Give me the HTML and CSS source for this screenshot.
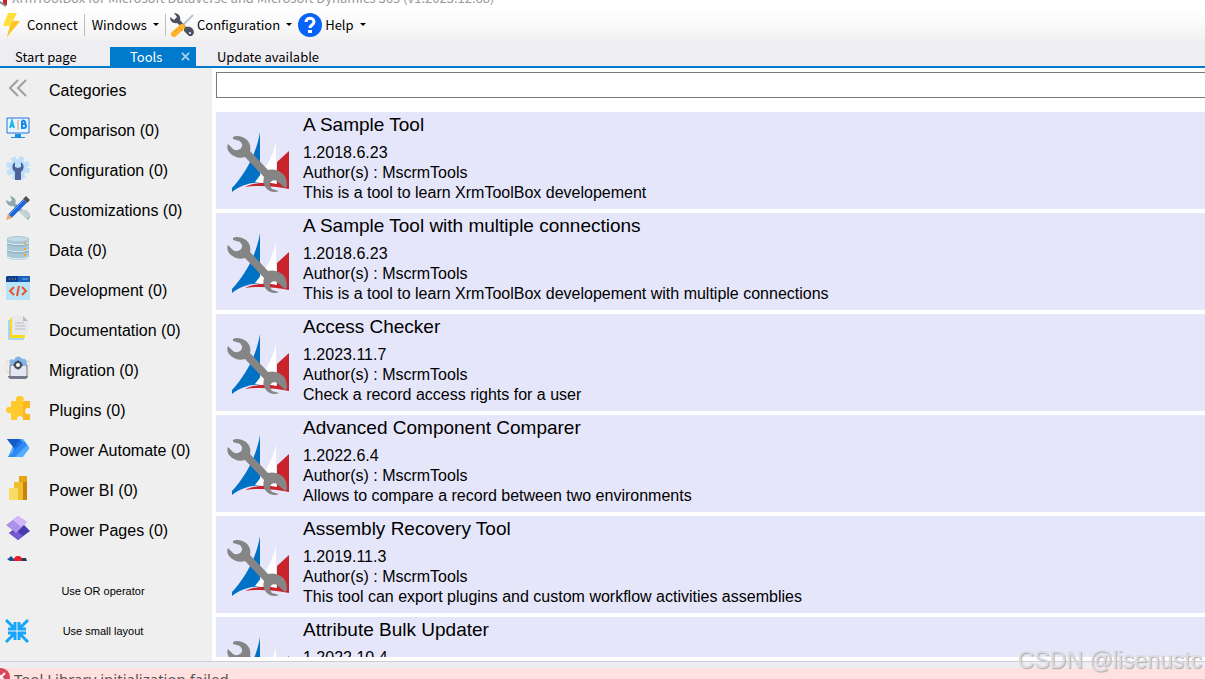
FILE: index.html
```html
<!DOCTYPE html>
<html lang="en">
<head>
  <meta charset="UTF-8">
  <meta name="viewport" content="width=device-width, initial-scale=1.0">
  <title>XrmToolBox</title>
  <link rel="stylesheet" href="styles.css">
</head>
<body>
  <svg class="sprite" aria-hidden="true">
    <symbol id="logo" viewBox="0 0 62 64">
      <path fill="#0072c6" d="M5 61V57C17 44 29 25 33 1V52C23 51 13 55 5 61Z"/>
      <path fill="#fff" d="M28 51C37 40 45 28 49 11V56C42 54 36 52 28 51Z"/>
      <path fill="#c9242b" d="M50 31L62 20V58C47 55 32 54 18 56C29 51 40 51 50 53Z"/>
      <path fill="#858585" d="M6 6C9 4 15 5 19 8C23 11 24 16 23 20L41 39C44 38 50 38 55 42C59 45 60 50 60 55L58 57L51 51C48 47 42 50 43 55L45 58L52 60C48 62 42 61 39 57C36 53 36 50 37 46L18 26C13 28 6 26 2 21C0 18 0 15 1 13L6 18C10 21 16 18 15 13L13 10L6 8Z"/>
    </symbol>
  </svg>

  <header class="titlebar">
    <svg class="app-icon" viewBox="0 0 8 8"><path fill="#c9242b" d="M3 0h4v5H3z"/><path stroke="#858585" stroke-width="2" d="M0 2l6 4"/></svg>
    <span>XrmToolBox for Microsoft Dataverse and Microsoft Dynamics 365 (v1.2023.12.68)</span>
  </header>

  <nav class="toolbar">
    <button>
      <svg viewBox="0 0 24 24"><path fill="#ffe03b" d="M8 0h9l-4 8h7L7 24l3-11H3z"/><path fill="#ffc328" d="M13 8h7L7 24l3-11z"/></svg>
      Connect
    </button>
    <button class="divided">Windows <i class="caret"></i></button>
    <button class="divided tight">
      <svg viewBox="0 0 24 24"><path stroke="#b9c3cb" stroke-width="2" d="M23 2L12 13"/><path fill="#4b5163" d="M4 0C9 0 11 4 10 7L16 14C21 13 24 16 24 20L22 23H19L14 18V16L7 10C3 11 0 8 0 4L4 7L7 4z"/><path stroke="#ffb52c" stroke-width="6" stroke-linecap="round" d="M12 14L4 21"/><path stroke="#ef8b2c" stroke-width="1" d="M9 14l4 4M5 19l3-3"/><circle cx="20" cy="20" r="1" fill="#fff"/></svg>
      Configuration <i class="caret"></i>
    </button>
    <button>
      <svg viewBox="0 0 24 24"><circle cx="12" cy="12" r="12" fill="#0864f7"/><path fill="none" stroke="#fff" stroke-width="3" d="M8 9c0-5 8-5 8 0 0 3-4 3-4 6"/><path fill="#fff" d="M10 17h4v3h-4z"/></svg>
      Help <i class="caret"></i>
    </button>
  </nav>

  <nav class="tabs">
    <a href="#start" class="tab start">Start page</a>
    <div class="tab active"><a href="#tools">Tools</a><button aria-label="Close Tools"><svg viewBox="0 0 10 10"><path stroke="#a9d0ee" stroke-width="2" d="M1 1l8 8M9 1L1 9"/></svg></button></div>
    <a href="#update" class="tab update">Update available</a>
  </nav>

  <main>
    <aside class="sidebar">
      <div class="categories">
        <button>
          <svg viewBox="0 0 24 24"><path fill="none" stroke="#a0a0a0" stroke-width="2" d="M12 4l-8 8 8 8M20 4l-8 8 8 8"/></svg>
          Categories
        </button>
        <button>
          <svg viewBox="0 0 24 24"><path fill="#e4f6ff" stroke="#2b6fe0" stroke-width="1" d="M1 2h22v15H1z"/><path fill="none" stroke="#25b5ea" stroke-width="2" d="M4 12l2-7 2 7M5 10h3"/><path fill="none" stroke="#1689e8" stroke-width="2" d="M16 5v7h2q2 0 2-2t-2-2h-2 2q2 0 1-2t-3-1"/><path stroke="#f08a62" d="M12 4v10"/><path fill="#188fe6" d="M9 18h6v3h4v1H5v-1h4z"/></svg>
          Comparison (0)
        </button>
        <button>
          <svg viewBox="0 0 24 24"><circle cx="12" cy="12" r="9" fill="#bfe0fb"/><circle cx="12" cy="12" r="10" fill="none" stroke="#bfe0fb" stroke-width="4" stroke-dasharray="5 3"/><path fill="#4f639b" d="M9 6v5l3 1 3-1V6c4 3 3 8 0 10v8H9v-8C5 13 6 8 9 6z"/></svg>
          Configuration (0)
        </button>
        <button>
          <svg viewBox="0 0 24 24"><path fill="#8fa7ad" d="M4 0C9 1 11 5 9 7L17 14C21 14 24 17 24 21L22 24L17 19L15 17L7 10C3 11 0 7 0 4L4 6L6 4z"/><path fill="#c2d2d5" d="M14 14l3 0c3 0 6 3 7 6l-3 3-7-6z"/><path stroke="#1e65dc" stroke-width="5" d="M19 5L4 20"/><path stroke="#5b9bf5" stroke-width="1" d="M18 4L3 19"/><path fill="#4a4f55" d="M17 3l3-3 4 4-3 3z"/><path fill="#f3a06b" d="M2 18l4 4-6 2z"/></svg>
          Customizations (0)
        </button>
        <button>
          <svg viewBox="0 0 24 24"><path fill="#a9c7d5" d="M1 3c0-4 22-4 22 0v18c0 4-22 4-22 0z"/><ellipse cx="12" cy="3" rx="10" ry="2" fill="#c4dbe5"/><path fill="none" stroke="#e8f3f7" stroke-width="1" d="M1 7q11 4 22 0M1 14q11 4 22 0M1 21q11 4 22 0"/><path fill="none" stroke="#86a6b5" stroke-width="1" d="M1 8q11 4 22 0M1 15q11 4 22 0"/><path fill="#f2a33a" d="M18 6h2v2h-2zM18 12h2v2h-2zM18 18h2v2h-2z"/></svg>
          Data (0)
        </button>
        <button>
          <svg viewBox="0 0 24 24"><rect width="24" height="24" rx="1" fill="#b9e3f8"/><path fill="#0b3f91" d="M1 0h22l1 1v5H0V1z"/><path fill="#1761bd" d="M12 0h11l1 1v5H12z"/><path stroke="#ff9440" stroke-width="1" stroke-dasharray="1 2" d="M3 3h8"/><path stroke="#74b7ef" d="M16 3h6"/><path fill="none" stroke="#ee5327" stroke-width="2" d="M8 11l-4 4 4 4M16 11l4 4-4 4M13 10l-2 10"/></svg>
          Development (0)
        </button>
        <button>
          <svg viewBox="0 0 24 24"><path fill="#a9d5f3" d="M2 4h16v20H3l-1-1z"/><path fill="#f8dc19" d="M4 2h15v20H4z"/><path fill="#e9e9ec" d="M6 0h11l5 5v14H6z"/><path fill="#b8b8bd" d="M17 0v5h5z"/><path stroke="#bcbcc1" d="M9 7h9M9 10h10M9 13h10"/></svg>
          Documentation (0)
        </button>
        <button>
          <svg viewBox="0 0 24 24"><path fill="#e4e7f1" stroke="#6f7588" d="M4 9h17v12H4z"/><path fill="#82b4ea" d="M4 9c-2-4 1-7 4-5 2-5 7-4 8-1 5-1 6 4 4 7z"/><circle cx="12" cy="9" r="3" fill="#fff" stroke="#424957" stroke-width="2"/><path stroke="#424957" d="M12 4v2M12 12v2M7 9h2M15 9h2"/><path fill="#727888" d="M2 20h20v1l-2 2H4l-2-2z"/><path fill="none" stroke="#eccb91" stroke-dasharray="2 1" d="M3 5H0v11h3M21 5h3v11h-3"/></svg>
          Migration (0)
        </button>
        <button>
          <svg viewBox="0 0 24 24"><path fill="#ffca2c" d="M5 5h5C9 2 11 0 14 0s5 2 3 5h7v7c-3-1-5 0-5 3s2 4 5 3v6h-7c0-3-1-4-3-4s-3 1-3 4H5v-7c-3 1-5-1-5-3s2-4 5-3z"/><path fill="#fdb722" d="M17 5h7v7c-3-1-5 0-5 3s2 4 5 3v6h-7z"/></svg>
          Plugins (0)
        </button>
        <button>
          <svg viewBox="0 0 24 24"><path fill="#56adff" d="M10 3h7l6 8v2l-6 8H2z"/><path fill="#1e70e5" d="M1 3h13l4 5L8 19l-1-1 1-6z"/><path fill="#155bc7" d="M1 3h13L8 12z"/><path fill="#2e89f4" d="M2 21L18 5l3 4-12 12z"/></svg>
          Power Automate (0)
        </button>
        <button>
          <svg viewBox="0 0 24 24"><rect x="13" width="8" height="24" rx="1" fill="#e4a414"/><path fill="#c98209" d="M17 6h4v18h-4z"/><rect x="8" y="6" width="9" height="18" rx="1" fill="#efbe2d"/><rect x="3" y="12" width="9" height="12" rx="1" fill="#f8dc62"/></svg>
          Power BI (0)
        </button>
        <button>
          <svg viewBox="0 0 24 24"><path fill="#4939ac" d="M3 17l8-6 7-2 6 6-12 9z"/><path fill="#745ad3" d="M3 17l8-2 6 5-5 4z"/><path fill="#ab91ea" d="M0 9L12 0l9 6-11 11z"/><path fill="#d1b9f7" d="M7 4l5-4 9 6-6 5z"/></svg>
          Power Pages (0)
        </button>
        <button aria-label="More categories">
          <svg viewBox="0 0 24 24"><path fill="#194f91" d="M1 3l2-1 2-2 3 3 2-1v3H4z"/><path fill="#263b54" d="M14 2h6l1 3h-7z"/><circle cx="12" cy="4" r="4" fill="#e51c2b"/></svg>
        </button>
      </div>
      <div class="options">
        <button>Use OR operator</button>
        <button>
          <svg viewBox="0 0 24 24"><path fill="none" stroke="#16a5fa" stroke-width="3" d="M1 1l8 8M10 3v7H3M23 1l-8 8M14 3v7h7M1 23l8-8M10 21v-7H3M23 23l-8-8M14 21v-7h7"/></svg>
          Use small layout
        </button>
      </div>
    </aside>

    <section class="content">
      <input class="search" type="text" aria-label="Search tools">
      <div class="tools">
        <article class="tool">
          <svg><use href="#logo"/></svg>
          <div>
            <h2>A Sample Tool</h2>
            <p>1.2018.6.23</p>
            <p>Author(s) : MscrmTools</p>
            <p>This is a tool to learn XrmToolBox developement</p>
          </div>
        </article>
        <article class="tool">
          <svg><use href="#logo"/></svg>
          <div>
            <h2>A Sample Tool with multiple connections</h2>
            <p>1.2018.6.23</p>
            <p>Author(s) : MscrmTools</p>
            <p>This is a tool to learn XrmToolBox developement with multiple connections</p>
          </div>
        </article>
        <article class="tool">
          <svg><use href="#logo"/></svg>
          <div>
            <h2>Access Checker</h2>
            <p>1.2023.11.7</p>
            <p>Author(s) : MscrmTools</p>
            <p>Check a record access rights for a user</p>
          </div>
        </article>
        <article class="tool">
          <svg><use href="#logo"/></svg>
          <div>
            <h2>Advanced Component Comparer</h2>
            <p>1.2022.6.4</p>
            <p>Author(s) : MscrmTools</p>
            <p>Allows to compare a record between two environments</p>
          </div>
        </article>
        <article class="tool">
          <svg><use href="#logo"/></svg>
          <div>
            <h2>Assembly Recovery Tool</h2>
            <p>1.2019.11.3</p>
            <p>Author(s) : MscrmTools</p>
            <p>This tool can export plugins and custom workflow activities assemblies</p>
          </div>
        </article>
        <article class="tool">
          <svg><use href="#logo"/></svg>
          <div>
            <h2>Attribute Bulk Updater</h2>
            <p>1.2022.10.4</p>
          </div>
        </article>
      </div>
    </section>
  </main>

  <footer class="status">
    <div class="error">
      <svg viewBox="0 0 18 18"><circle cx="9" cy="9" r="9" fill="#d9455a"/><path stroke="#fff" stroke-width="2" d="M5 5l8 8M13 5l-8 8"/></svg>
      <span>Tool Library initialization failed</span>
    </div>
  </footer>
  <div class="watermark">CSDN @lisenustc</div>
</body>
</html>
```
FILE: styles.css
```css
* {
  padding: 0;
  margin: 0;
  box-sizing: border-box;
}
body {
  display: flex;
  flex-direction: column;
  height: 100vh;
  overflow: hidden;
  background-color: #fff;
  color: #000;
  font-family: "Liberation Sans", Arial, sans-serif;
  font-size: 16px;
}
button {
  display: flex;
  align-items: center;
  border: none;
  background: none;
  color: inherit;
  font: inherit;
  white-space: nowrap;
}
a {
  color: inherit;
  text-decoration: none;
}
svg {
  flex: none;
}
.sprite {
  display: none;
}

/* window title and menu */
.titlebar {
  display: flex;
  align-items: flex-end;
  gap: 4px;
  height: 8px;
  flex: none;
  overflow: hidden;
  color: #999;
  font: 13px/20px "Noto Sans CJK SC", sans-serif;
}
.app-icon {
  width: 8px;
  height: 8px;
}
.toolbar {
  display: flex;
  align-items: center;
  height: 33px;
  flex: none;
  background: linear-gradient(#fff, #f8f8f8 60%, #f0f0f0);
  font: 13px/24px "Noto Sans CJK SC", sans-serif;
}
.toolbar button {
  gap: 3px;
  padding-right: 6px;
}
.toolbar svg {
  width: 24px;
  height: 24px;
}
.toolbar .divided {
  border-left: 1px solid #bdbdbd;
  height: 22px;
  padding-left: 7px;
}
.toolbar .tight {
  padding-left: 4px;
}
.caret {
  border: 3px solid transparent;
  border-top-color: #000;
  border-bottom: none;
  margin-left: 3px;
}

/* document tabs */
.tabs {
  display: flex;
  height: 27px;
  flex: none;
  padding-top: 6px;
  border-bottom: 2px solid #007acc;
  background-color: #eeedf2;
  font: 13px/20px "Noto Sans CJK SC", sans-serif;
}
.tab {
  display: flex;
  align-items: center;
}
.start {
  width: 110px;
  padding-left: 15px;
}
.active {
  justify-content: space-between;
  width: 86px;
  padding: 0 6px 0 20px;
  background-color: #007acc;
  color: #fff;
}
.active svg {
  width: 9px;
  height: 9px;
}
.update {
  padding-left: 21px;
}

main {
  display: flex;
  flex: 1;
  min-height: 0;
}
.sidebar {
  display: flex;
  flex-direction: column;
  width: 212px;
  flex: none;
  background-color: #efefef;
}
.categories {
  flex: 1;
  min-height: 0;
  overflow: hidden;
  padding-top: 3px;
}
.categories button {
  gap: 19px;
  width: 100%;
  height: 40px;
  padding-left: 6px;
}
.sidebar svg {
  width: 24px;
  height: 24px;
  margin-bottom: 6px;
}
.options {
  padding: 10px 0;
}
.options button {
  position: relative;
  justify-content: center;
  width: 206px;
  height: 40px;
  font-size: 11px;
}
.options svg {
  position: absolute;
  left: 5px;
  margin: 0;
}

.content {
  display: flex;
  flex-direction: column;
  flex: 1;
  min-width: 0;
  padding: 4px 0 4px 4px;
}
.search {
  width: 100%;
  height: 26px;
  flex: none;
  padding: 0 4px;
  border: 1px solid #7a7a7a;
  border-right: none;
  font: inherit;
}
.tools {
  flex: 1;
  min-height: 0;
  margin-top: 14px;
  overflow: hidden;
}
.tool {
  display: flex;
  gap: 14px;
  height: 97px;
  margin-bottom: 4px;
  padding-left: 11px;
  background-color: #e6e6fa;
}
.tool svg {
  width: 62px;
  height: 64px;
  margin-top: 19px;
}
.tool h2 {
  margin-bottom: 5px;
  font-size: 19px;
  font-weight: normal;
  line-height: 26px;
}
.tool p {
  line-height: 20px;
}

.status {
  height: 18px;
  flex: none;
  padding-top: 6px;
  overflow: hidden;
  border-top: 1px solid #ccccdb;
  background-color: #eeedf2;
}
.error {
  display: flex;
  align-items: flex-start;
  gap: 4px;
  background-color: #ffe1e0;
  color: #555;
  font: 15px/22px "Noto Sans", sans-serif;
}
.error svg {
  width: 18px;
  height: 18px;
  margin-left: -8px;
}
.watermark {
  position: absolute;
  right: 3px;
  bottom: 6px;
  color: #dcdce2;
  font-size: 23px;
  line-height: 26px;
  text-shadow: 1px 1px 1px #aaa;
}
```
